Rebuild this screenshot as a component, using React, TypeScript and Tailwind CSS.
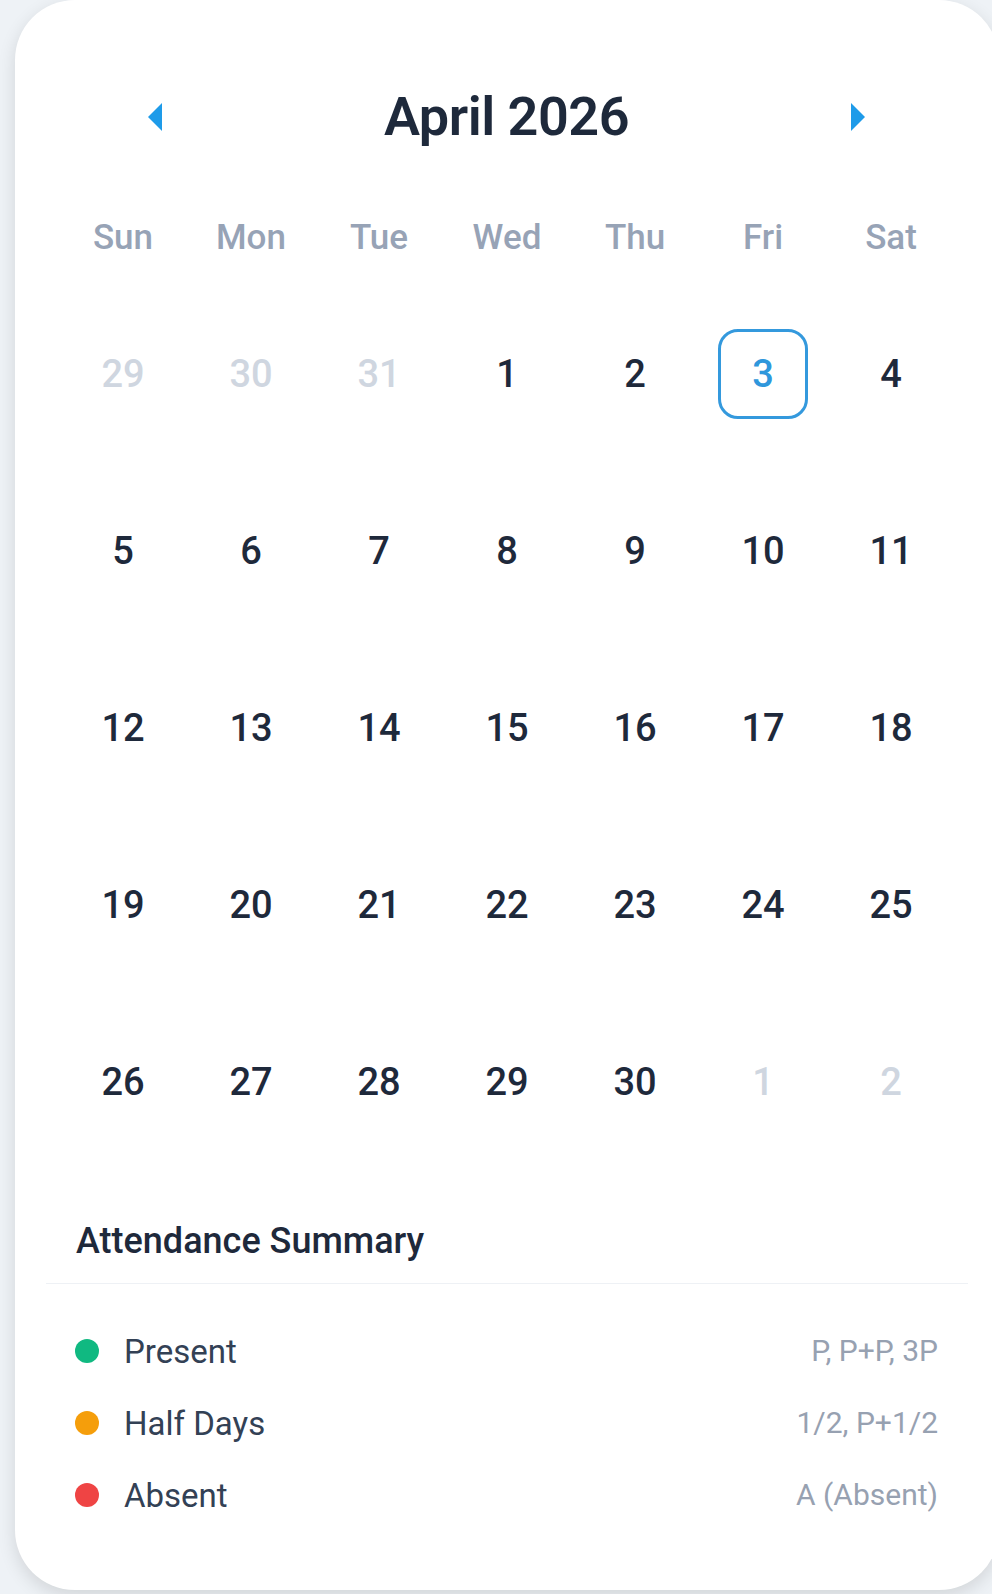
import React from "react";

type Cell = { d: number; muted?: boolean; selected?: boolean };

const weeks: Cell[][] = [
  [{ d: 29, muted: true }, { d: 30, muted: true }, { d: 31, muted: true }, { d: 1 }, { d: 2 }, { d: 3, selected: true }, { d: 4 }],
  [{ d: 5 }, { d: 6 }, { d: 7 }, { d: 8 }, { d: 9 }, { d: 10 }, { d: 11 }],
  [{ d: 12 }, { d: 13 }, { d: 14 }, { d: 15 }, { d: 16 }, { d: 17 }, { d: 18 }],
  [{ d: 19 }, { d: 20 }, { d: 21 }, { d: 22 }, { d: 23 }, { d: 24 }, { d: 25 }],
  [{ d: 26 }, { d: 27 }, { d: 28 }, { d: 29 }, { d: 30 }, { d: 1, muted: true }, { d: 2, muted: true }],
];

const dayNames = ["Sun", "Mon", "Tue", "Wed", "Thu", "Fri", "Sat"];

const legend = [
  { label: "Present", value: "P, P+P, 3P", color: "bg-[#10b981]" },
  { label: "Half Days", value: "1/2, P+1/2", color: "bg-[#f59e0b]" },
  { label: "Absent", value: "A (Absent)", color: "bg-[#ef4444]" },
];

export default function App() {
  return (
    <div
      className="w-[992px] h-[1594px] overflow-hidden bg-[#eef2f6]"
      style={{ fontFamily: "Roboto, 'Liberation Sans', sans-serif" }}
    >
      <div className="ml-[15px] w-[984px] h-[1590px] bg-white rounded-[60px] shadow-[0_6px_18px_rgba(0,0,0,0.12)] flex flex-col pt-[77px]">
        {/* Header */}
        <div className="h-[80px] flex items-center justify-between pl-[120px] pr-[121px]">
          <button className="w-[40px] h-[40px] flex items-center justify-center">
            <svg width="16" height="30" viewBox="0 0 16 30">
              <polygon points="15,1 1,15 15,29" fill="#1e9be9" />
            </svg>
          </button>
          <div className="text-[54px] font-semibold text-[#1e293b] tracking-[-0.5px] leading-none">
            April 2026
          </div>
          <button className="w-[40px] h-[40px] flex items-center justify-center">
            <svg width="16" height="30" viewBox="0 0 16 30">
              <polygon points="1,1 15,15 1,29" fill="#1e9be9" />
            </svg>
          </button>
        </div>

        {/* Calendar grid */}
        <div className="px-[44px] mt-[55px]">
          <div className="grid grid-cols-7 h-[50px] items-center">
            {dayNames.map((n) => (
              <div key={n} className="text-center text-[35px] font-medium text-[#97a3b6] leading-none">
                {n}
              </div>
            ))}
          </div>
          <div className="mt-[23px] flex flex-col">
            {weeks.map((w, i) => (
              <div key={i} className="grid grid-cols-7 h-[177px] items-center">
                {w.map((c, j) => (
                  <div key={j} className="flex items-center justify-center">
                    {c.selected ? (
                      <div className="w-[90px] h-[90px] rounded-[20px] border-[3px] border-[#3499dd] flex items-center justify-center text-[38px] font-medium text-[#2f97dc] leading-none">
                        {c.d}
                      </div>
                    ) : (
                      <div
                        className={
                          c.muted
                            ? "text-[38px] font-medium text-[#cfd6e0] leading-none"
                            : "text-[38px] font-medium text-[#1e293b] leading-none"
                        }
                      >
                        {c.d}
                      </div>
                    )}
                  </div>
                ))}
              </div>
            ))}
          </div>
        </div>

        {/* Summary */}
        <div className="px-[31px] mt-[49px]">
          <div className="h-[44px] flex items-center pl-[30px] text-[36px] font-medium text-[#1e293b] leading-none">
            Attendance Summary
          </div>
          <div className="mt-[20px] border-t border-[#eef1f5]" />
          <div className="mt-[31px] flex flex-col">
            {legend.map((l) => (
              <div key={l.label} className="h-[72px] flex items-center justify-between pl-[29px] pr-[30px]">
                <div className="flex items-center gap-[25px]">
                  <span className={`w-[24px] h-[24px] rounded-full ${l.color}`} />
                  <span className="text-[33px] text-[#334155] leading-none">{l.label}</span>
                </div>
                <span className="text-[30px] text-[#97a1b1] leading-none">{l.value}</span>
              </div>
            ))}
          </div>
        </div>
      </div>
    </div>
  );
}
